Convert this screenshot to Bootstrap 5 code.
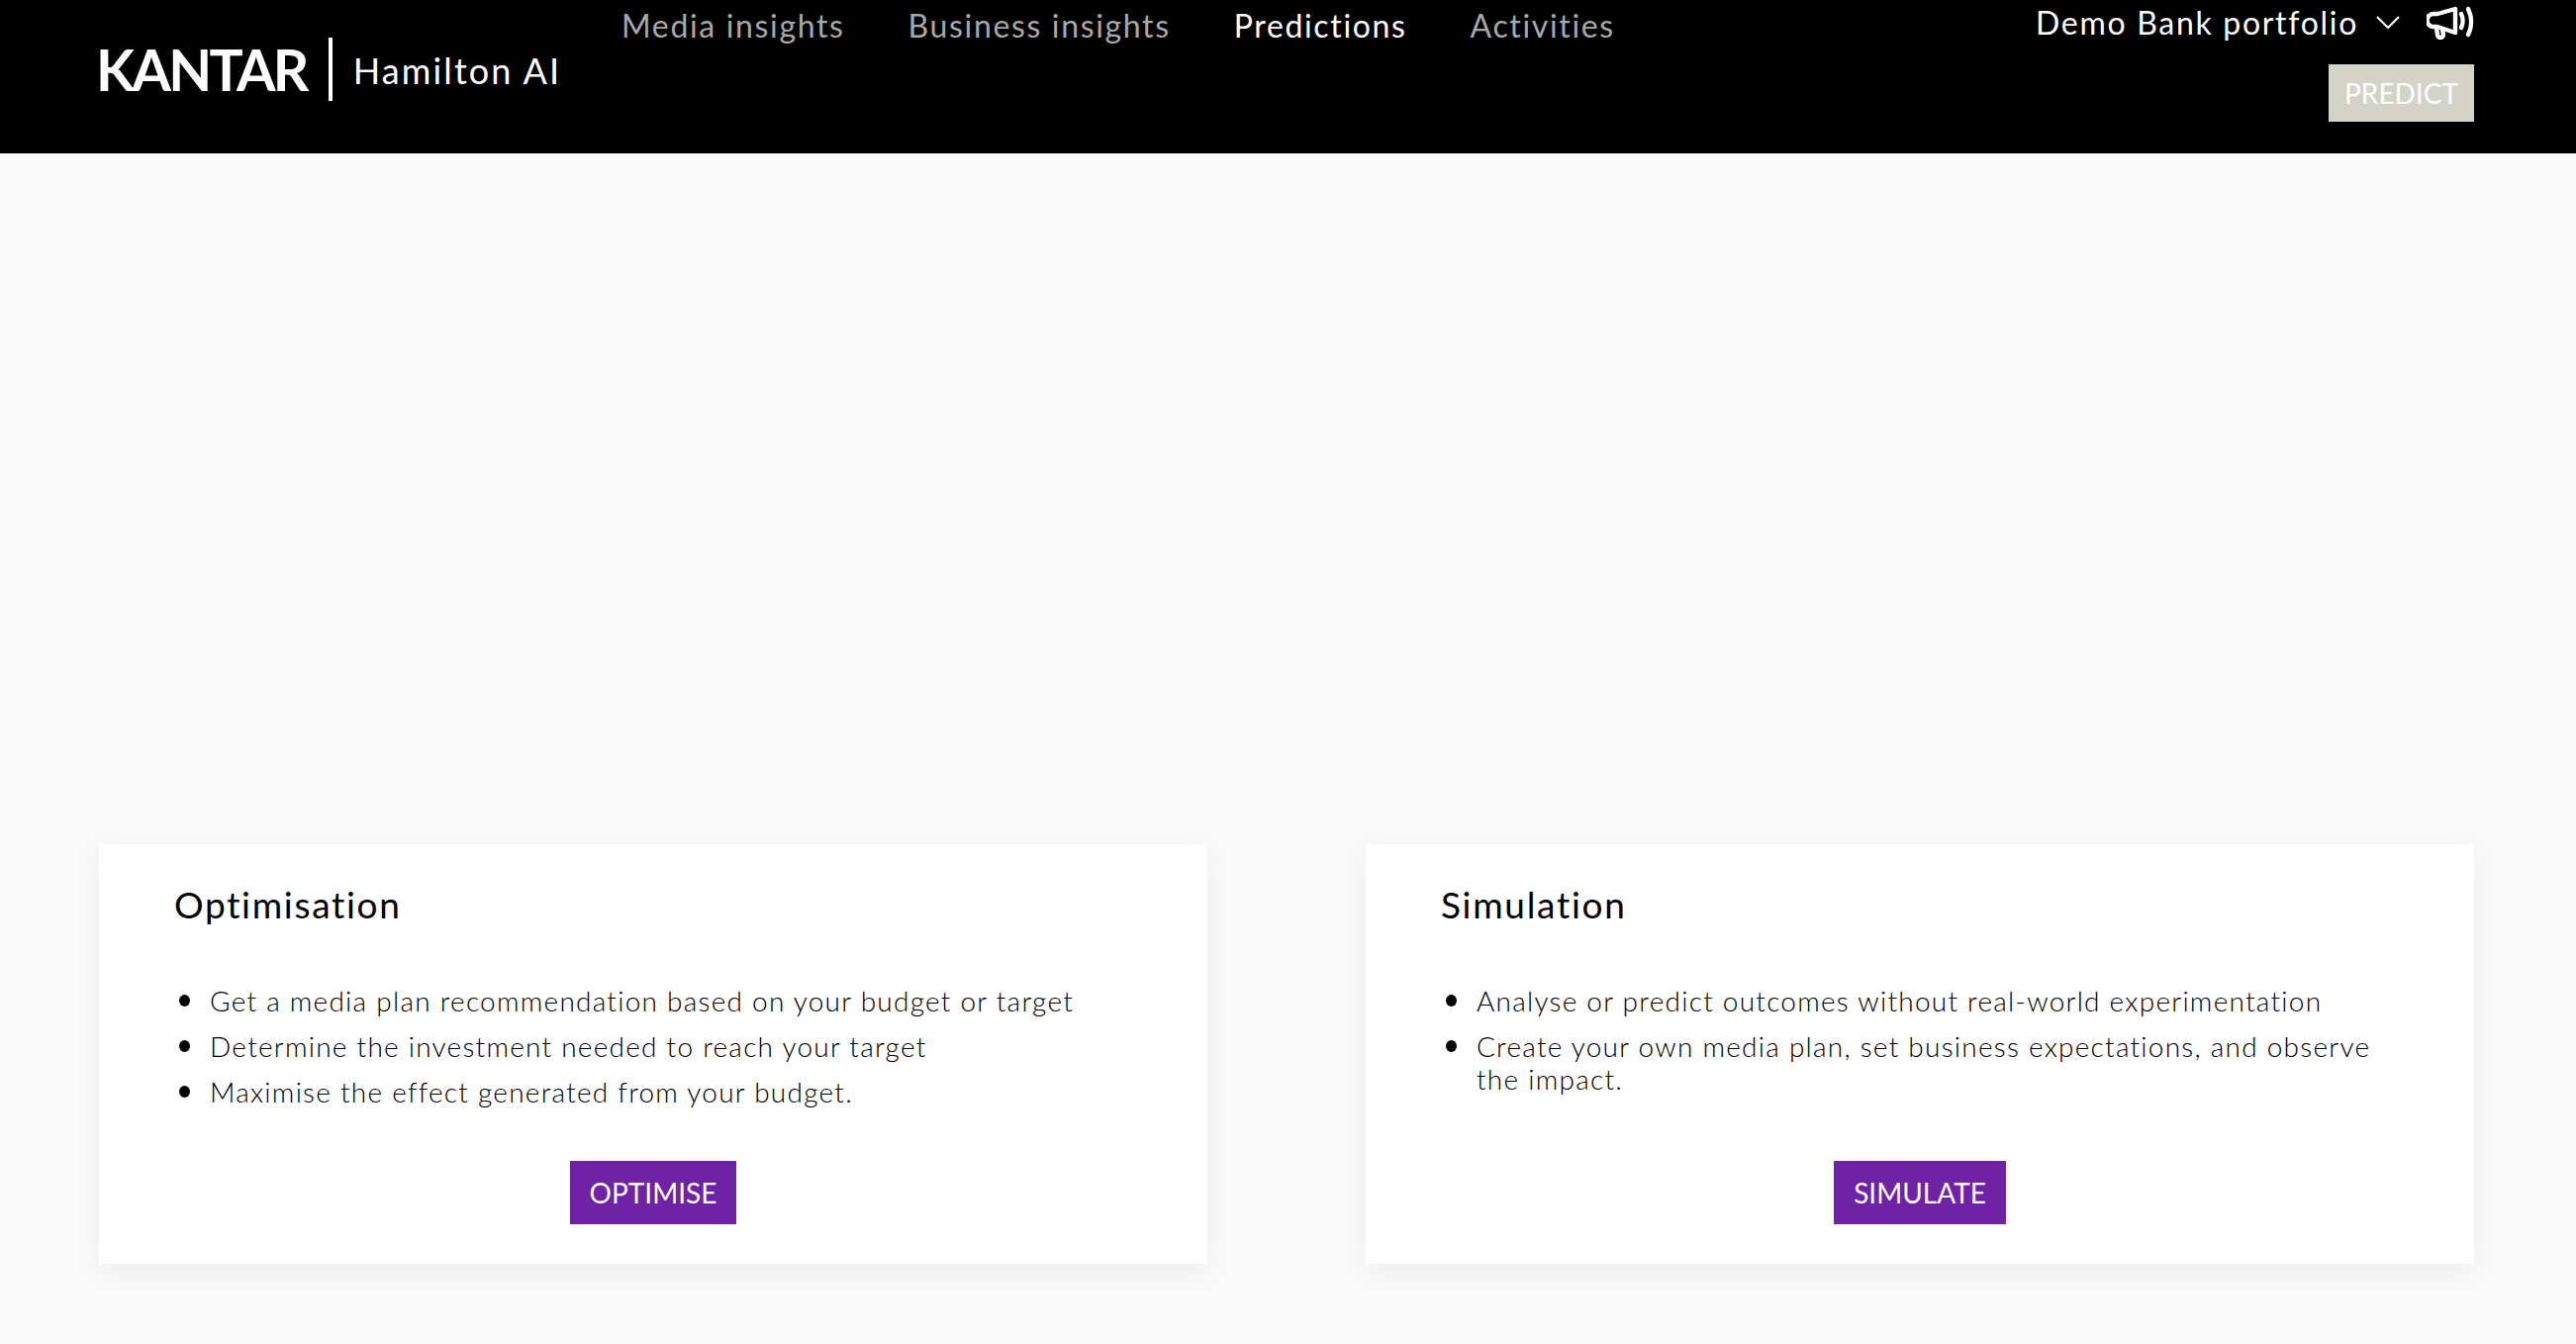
<!DOCTYPE html>
<html lang="en">
  <head>
    <meta charset="UTF-8" />
    <title>Hamilton AI</title>
    <link
      href="https://cdn.jsdelivr.net/npm/bootstrap@5.3.3/dist/css/bootstrap.min.css"
      rel="stylesheet"
    />
    <style>
      body {
        background: #fafafa;
        font-family: "Lato", "Liberation Sans", sans-serif;
        color: #000;
        min-height: 1358px;
      }
      .top-header {
        background: #000;
        height: 155px;
        padding: 0 103px 0 97px;
      }
      .brand-block {
        padding-top: 38px;
        width: 531px;
      }
      .brand-logo {
        font-size: 57px;
        font-weight: 700;
        line-height: 64px;
        color: #fff;
        letter-spacing: -2.7px;
      }
      .brand-line {
        width: 4px;
        height: 64px;
        background: #fff;
        margin: 0 21px 0 22px;
      }
      .brand-name {
        font-size: 36px;
        color: #fff;
        letter-spacing: 2.1px;
        line-height: 66px;
      }
      .main-links {
        gap: 64px;
        padding-top: 4px;
      }
      .main-links a {
        font-size: 32px;
        line-height: 44px;
        letter-spacing: 1.65px;
        color: #a8a8a8;
        text-decoration: none;
      }
      .main-links a.active {
        color: #fff;
      }
      .right-block {
        padding-top: 1px;
      }
      .portfolio-name {
        font-size: 32px;
        line-height: 44px;
        letter-spacing: 1.7px;
        color: #fff;
      }
      .chevron-icon {
        margin-left: 18px;
      }
      .speaker-icon {
        margin-left: 27px;
      }
      .predict-btn {
        background: #d3d3c8;
        color: #fff;
        font-size: 28px;
        line-height: 34px;
        width: 147px;
        height: 58px;
        margin-top: 20px;
        border: 0;
        border-radius: 0;
        padding: 0;
      }
      .cards-area {
        padding: 698px 103px 0 100px;
        gap: 160px;
      }
      .info-box {
        flex: 1 1 0;
        height: 424px;
        background: #fff;
        border: 0;
        border-radius: 0;
        box-shadow: 0 8px 30px rgba(0, 0, 0, 0.06);
        padding: 38px 76px 0;
      }
      .info-box h2 {
        font-size: 37px;
        font-weight: 400;
        letter-spacing: 1.7px;
        line-height: 46px;
        margin: 0 0 58px;
      }
      .info-box ul {
        font-size: 28px;
        font-weight: 300;
        letter-spacing: 1.25px;
        line-height: 33px;
        list-style: none;
        padding-left: 36px;
        margin: 0;
        height: 150px;
      }
      .info-box li {
        position: relative;
        margin-bottom: 13px;
      }
      .info-box li::before {
        content: "";
        position: absolute;
        left: -31px;
        top: 10px;
        width: 11px;
        height: 12px;
        border-radius: 50%;
        background: #000;
      }
      .action-btn {
        background: #7022a6;
        color: #fff;
        font-size: 28px;
        line-height: 34px;
        height: 64px;
        padding: 0 20px;
        border: 0;
        border-radius: 0;
      }
      .btn-row {
        margin-top: 28px;
      }
    </style>
  </head>
  <body>
    <header class="top-header d-flex">
      <div class="brand-block d-flex align-items-start">
        <span class="brand-logo">KANTAR</span>
        <span class="brand-line"></span>
        <span class="brand-name">Hamilton AI</span>
      </div>
      <nav class="main-links d-flex align-items-start flex-grow-1">
        <a href="#">Media insights</a>
        <a href="#">Business insights</a>
        <a href="#" class="active">Predictions</a>
        <a href="#">Activities</a>
      </nav>
      <div class="right-block d-flex flex-column align-items-end">
        <div class="d-flex align-items-center">
          <span class="portfolio-name">Demo Bank portfolio</span>
          <svg class="chevron-icon" width="24" height="14" viewBox="0 0 24 14" fill="none" stroke="#fff" stroke-width="2.2">
            <path d="M1 1l11 11L23 1" />
          </svg>
          <svg class="speaker-icon" width="48" height="34" viewBox="0 0 48 34" fill="none" stroke="#fff" stroke-width="4.4" stroke-linecap="round" stroke-linejoin="round">
            <path d="M29 3v24L11 21H7a5.500 5.500 0 0 1 0-13h4z" />
            <path d="M10 22l1 7a3 3 0 0 0 6 0l-1-5" />
            <path d="M35 8c2 4 2 10 0 14" />
            <path d="M42 3c4 8 4 18 0 26" />
          </svg>
        </div>
        <button class="btn predict-btn">PREDICT</button>
      </div>
    </header>

    <main class="cards-area d-flex">
      <section class="card info-box">
        <h2>Optimisation</h2>
        <ul>
          <li>Get a media plan recommendation based on your budget or target</li>
          <li>Determine the investment needed to reach your target</li>
          <li>Maximise the effect generated from your budget.</li>
        </ul>
        <div class="text-center btn-row">
          <button class="btn action-btn">OPTIMISE</button>
        </div>
      </section>
      <section class="card info-box">
        <h2>Simulation</h2>
        <ul>
          <li>Analyse or predict outcomes without real-world experimentation</li>
          <li>Create your own media plan, set business expectations, and observe the impact.</li>
        </ul>
        <div class="text-center btn-row">
          <button class="btn action-btn">SIMULATE</button>
        </div>
      </section>
    </main>

    <script src="https://cdn.jsdelivr.net/npm/bootstrap@5.3.3/dist/js/bootstrap.bundle.min.js"></script>
  </body>
</html>
